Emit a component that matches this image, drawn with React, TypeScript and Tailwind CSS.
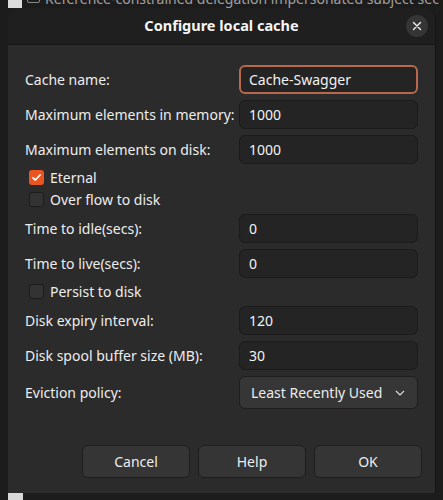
import React from "react";

const font = { fontFamily: '"Noto Sans", "Open Sans", sans-serif' };

function Input({ value, focused }: { value: string; focused?: boolean }) {
  return (
    <div
      className={
        "w-[179px] h-[29px] rounded-[6px] bg-[#242424] flex items-center text-[14px] text-[#f2f2f2] " +
        (focused ? "border-2 border-[#b8694c] pl-[8px]" : "border border-[#1b1b1b] pl-[9px]")
      }
    >
      {value}
    </div>
  );
}

function Row({ label, children }: { label: string; children: React.ReactNode }) {
  return (
    <div className="flex items-center justify-between">
      <span className="text-[14px] text-[#ededed]">{label}</span>
      {children}
    </div>
  );
}

function Check({ label, checked }: { label: string; checked?: boolean }) {
  return (
    <div className="h-[22px] flex items-center pl-[4px] gap-[6px]">
      {checked ? (
        <div className="w-[15px] h-[15px] rounded-[3px] bg-[#e95420] flex items-center justify-center">
          <svg width="11" height="11" viewBox="0 0 11 11">
            <path d="M2 5.8 L4.4 8 L9 3" fill="none" stroke="#fff" strokeWidth="1.8" strokeLinecap="round" strokeLinejoin="round" />
          </svg>
        </div>
      ) : (
        <div className="w-[15px] h-[15px] rounded-[3px] bg-[#333333] border border-[#1c1c1c]" />
      )}
      <span className="text-[14px] text-[#ededed]">{label}</span>
    </div>
  );
}

function Btn({ label }: { label: string }) {
  return (
    <div className="w-[108px] h-[33px] rounded-[6px] bg-[#353535] border border-[#1e1e1e] flex items-center justify-center text-[14px] text-[#ededed]">
      {label}
    </div>
  );
}

export default function App() {
  return (
    <div className="w-[443px] h-[500px] bg-[#1c1c1c] relative overflow-hidden" style={font}>
      {/* background strip */}
      <div className="h-[8px] relative overflow-hidden">
        <div className="absolute left-[8px] top-0 w-[14px] h-[8px] bg-[#dcdcdc]" />
        <div className="absolute left-[27px] top-[-8px] w-[13px] h-[11px] border border-[#8a8a8a] rounded-[2px]" />
        <div className="absolute left-[45px] top-[-12px] text-[14px] text-[#a0a0a0] whitespace-nowrap">
          Reference-constrained delegation impersonated subject sec
        </div>
      </div>
      <div className="ml-[8px] w-[428px] h-[485px] rounded-t-[12px] bg-[#2b2b2b] flex flex-col overflow-hidden border-r border-[#141414]">
        <div className="h-[37px] bg-[#1f1f1f] border-b border-[#171717] flex items-center justify-center relative">
          <span className="text-[14.5px] font-bold text-[#f5f5f5]">Configure local cache</span>
          <div className="absolute right-[7px] top-[7px] w-[22px] h-[22px] rounded-full bg-[#353535] flex items-center justify-center">
            <svg width="10" height="10" viewBox="0 0 10 10">
              <path d="M1.5 1.5 L8.5 8.5 M8.5 1.5 L1.5 8.5" stroke="#f0f0f0" strokeWidth="1.4" strokeLinecap="round" />
            </svg>
          </div>
        </div>
        <div className="pl-[17px] pr-[17px] pt-[20px] flex flex-col">
          <Row label="Cache name:"><Input value="Cache-Swagger" focused /></Row>
          <div className="h-[6px]" />
          <Row label="Maximum elements in memory:"><Input value="1000" /></Row>
          <div className="h-[6px]" />
          <Row label="Maximum elements on disk:"><Input value="1000" /></Row>
          <div className="h-[2px]" />
          <Check label="Eternal" checked />
          <Check label="Over flow to disk" />
          <div className="h-[4px]" />
          <Row label="Time to idle(secs):"><Input value="0" /></Row>
          <div className="h-[6px]" />
          <Row label="Time to live(secs):"><Input value="0" /></Row>
          <div className="h-[2px]" />
          <Check label="Persist to disk" />
          <div className="h-[4px]" />
          <Row label="Disk expiry interval:"><Input value="120" /></Row>
          <div className="h-[6px]" />
          <Row label="Disk spool buffer size (MB):"><Input value="30" /></Row>
          <div className="h-[6px]" />
          <Row label="Eviction policy:">
            <div className="w-[179px] h-[33px] rounded-[6px] bg-[#363636] border border-[#1e1e1e] flex items-center justify-between pl-[11px] pr-[12px] text-[14px] text-[#ededed]">
              <span>Least Recently Used</span>
              <svg width="10" height="6" viewBox="0 0 10 6">
                <path d="M1 1 L5 5 L9 1" fill="none" stroke="#dcdcdc" strokeWidth="1.2" />
              </svg>
            </div>
          </Row>
          <div className="h-[36px]" />
          <div className="flex justify-end gap-[8px] pr-[-5px] mr-[-4px]">
            <Btn label="Cancel" />
            <Btn label="Help" />
            <Btn label="OK" />
          </div>
        </div>
      </div>
      <div className="absolute left-[8px] bottom-0 w-[15px] h-[7px] bg-[#d8d8d8]" />
    </div>
  );
}
